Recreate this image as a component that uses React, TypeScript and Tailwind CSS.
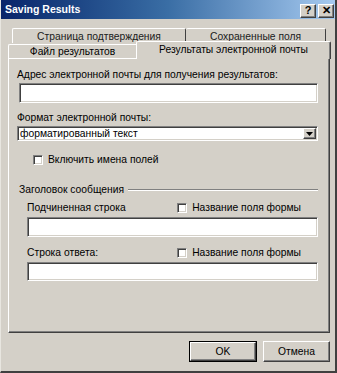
import React from "react";

const sunken =
  "border border-t-[#808080] border-l-[#808080] border-r-white border-b-white shadow-[inset_1px_1px_0_#404040,inset_-1px_-1px_0_#d4d0c8]";
const raised =
  "border border-t-white border-l-white border-r-[#404040] border-b-[#404040] shadow-[inset_-1px_-1px_0_#808080]";

function Check({ label }: { label: string }) {
  return (
    <div className="flex items-center gap-[5px]">
      <span className={`h-[10px] w-[10px] bg-white ${sunken}`} />
      <span>{label}</span>
    </div>
  );
}

function TitleButton({ children }: { children: React.ReactNode }) {
  return (
    <div
      className={`flex h-[14px] w-[16px] items-center justify-center bg-[#d4d0c8] text-[11px] font-bold leading-none text-black ${raised}`}
    >
      {children}
    </div>
  );
}

export default function App() {
  return (
    <div className="flex h-[373px] w-[337px] flex-col border-l border-r-2 border-b-2 border-l-[#e8e6e0] border-r-[#404040] border-b-[#404040] bg-[#d4d0c8] font-['Liberation_Sans',Arial,sans-serif] text-[10.3px] leading-[13px] text-black">
      {/* Заголовок окна */}
      <div className="flex h-[19px] items-center justify-between bg-linear-to-r from-[#0a246a] via-[#3a6ea5] to-[#a6caf0] pl-[4px] pr-[1px]">
        <span className="text-[10.5px] font-bold text-white">Saving Results</span>
        <div className="mt-[2px] flex gap-[2px]">
          <TitleButton>?</TitleButton>
          <TitleButton>✕</TitleButton>
        </div>
      </div>

      {/* Вкладки: задний ряд */}
      <div className="mt-[9px] flex h-[15px] pl-[11px]">
        <div className="flex w-[174px] items-center justify-center rounded-t-[2px] border-t border-l border-r border-t-white border-l-white border-r-[#404040] text-[#202020]">
          Страница подтверждения
        </div>
        <div className="flex w-[140px] items-center justify-center rounded-t-[2px] border-t border-r border-t-white border-r-[#404040] text-[#202020]">
          Сохраненные поля
        </div>
      </div>

      {/* Вкладки: передний ряд */}
      <div className="mt-[-2px] flex h-[17px] items-start pl-[7px]">
        <div className="mt-[3px] flex h-[14px] w-[128px] items-center justify-center rounded-tl-[2px] border-t border-l border-t-white border-l-white">
          Файл результатов
        </div>
        <div className="relative z-10 flex h-[18px] w-[195px] items-center justify-center rounded-t-[2px] border-t border-l border-r border-t-white border-l-white border-r-[#404040] bg-[#d4d0c8] pb-[2px] shadow-[inset_-1px_0_0_#808080]">
          Результаты электронной почты
        </div>
      </div>

      {/* Панель вкладки */}
      <div className="ml-[7px] flex h-[275px] w-[322px] flex-col border border-t-white border-l-white border-r-[#404040] border-b-[#404040] pt-[9px] pl-[8px] pr-[11px] shadow-[inset_-1px_-1px_0_#808080]">
        <span>Адрес электронной почты для получения результатов:</span>
        <div className={`ml-[2px] mt-[2px] h-[20px] bg-white ${sunken}`} />

        <span className="mt-[8px]">Формат электронной почты:</span>
        <div className={`mt-[2px] flex h-[15px] items-center justify-between bg-white pl-[2px] pr-[1px] ${sunken}`}>
          <span>форматированный текст</span>
          <div className={`flex h-[11px] w-[13px] items-center justify-center bg-[#d4d0c8] ${raised}`}>
            <svg width="7" height="4" viewBox="0 0 7 4">
              <path d="M0 0h7L3.5 4z" fill="#000" />
            </svg>
          </div>
        </div>

        <div className="ml-[16px] mt-[12px]">
          <Check label="Включить имена полей" />
        </div>

        {/* Заголовок сообщения */}
        <div className="mt-[17px] flex items-center">
          <span className="ml-[2px] w-[109px] whitespace-nowrap">Заголовок сообщения</span>
          <div className="h-[2px] flex-1 border-t border-b border-t-[#808080] border-b-white" />
        </div>

        <div className="pl-[10px]">
          <div className="mt-[5px] flex items-center justify-between pr-[17px]">
            <span>Подчиненная строка</span>
            <Check label="Название поля формы" />
          </div>
          <div className={`mt-[3px] h-[20px] bg-white ${sunken}`} />

          <div className="mt-[9px] flex items-center justify-between pr-[17px]">
            <span>Строка ответа:</span>
            <Check label="Название поля формы" />
          </div>
          <div className={`mt-[3px] h-[19px] bg-white ${sunken}`} />
        </div>
      </div>

      {/* Кнопки */}
      <div className="mt-[8px] flex justify-end gap-[6px] pr-[5px]">
        <button className="h-[21px] w-[68px] border border-black bg-[#d4d0c8] p-0">
          <div className={`flex h-full w-full items-center justify-center ${raised}`}>OK</div>
        </button>
        <button className={`flex h-[21px] w-[67px] items-center justify-center bg-[#d4d0c8] ${raised}`}>
          Отмена
        </button>
      </div>
    </div>
  );
}
